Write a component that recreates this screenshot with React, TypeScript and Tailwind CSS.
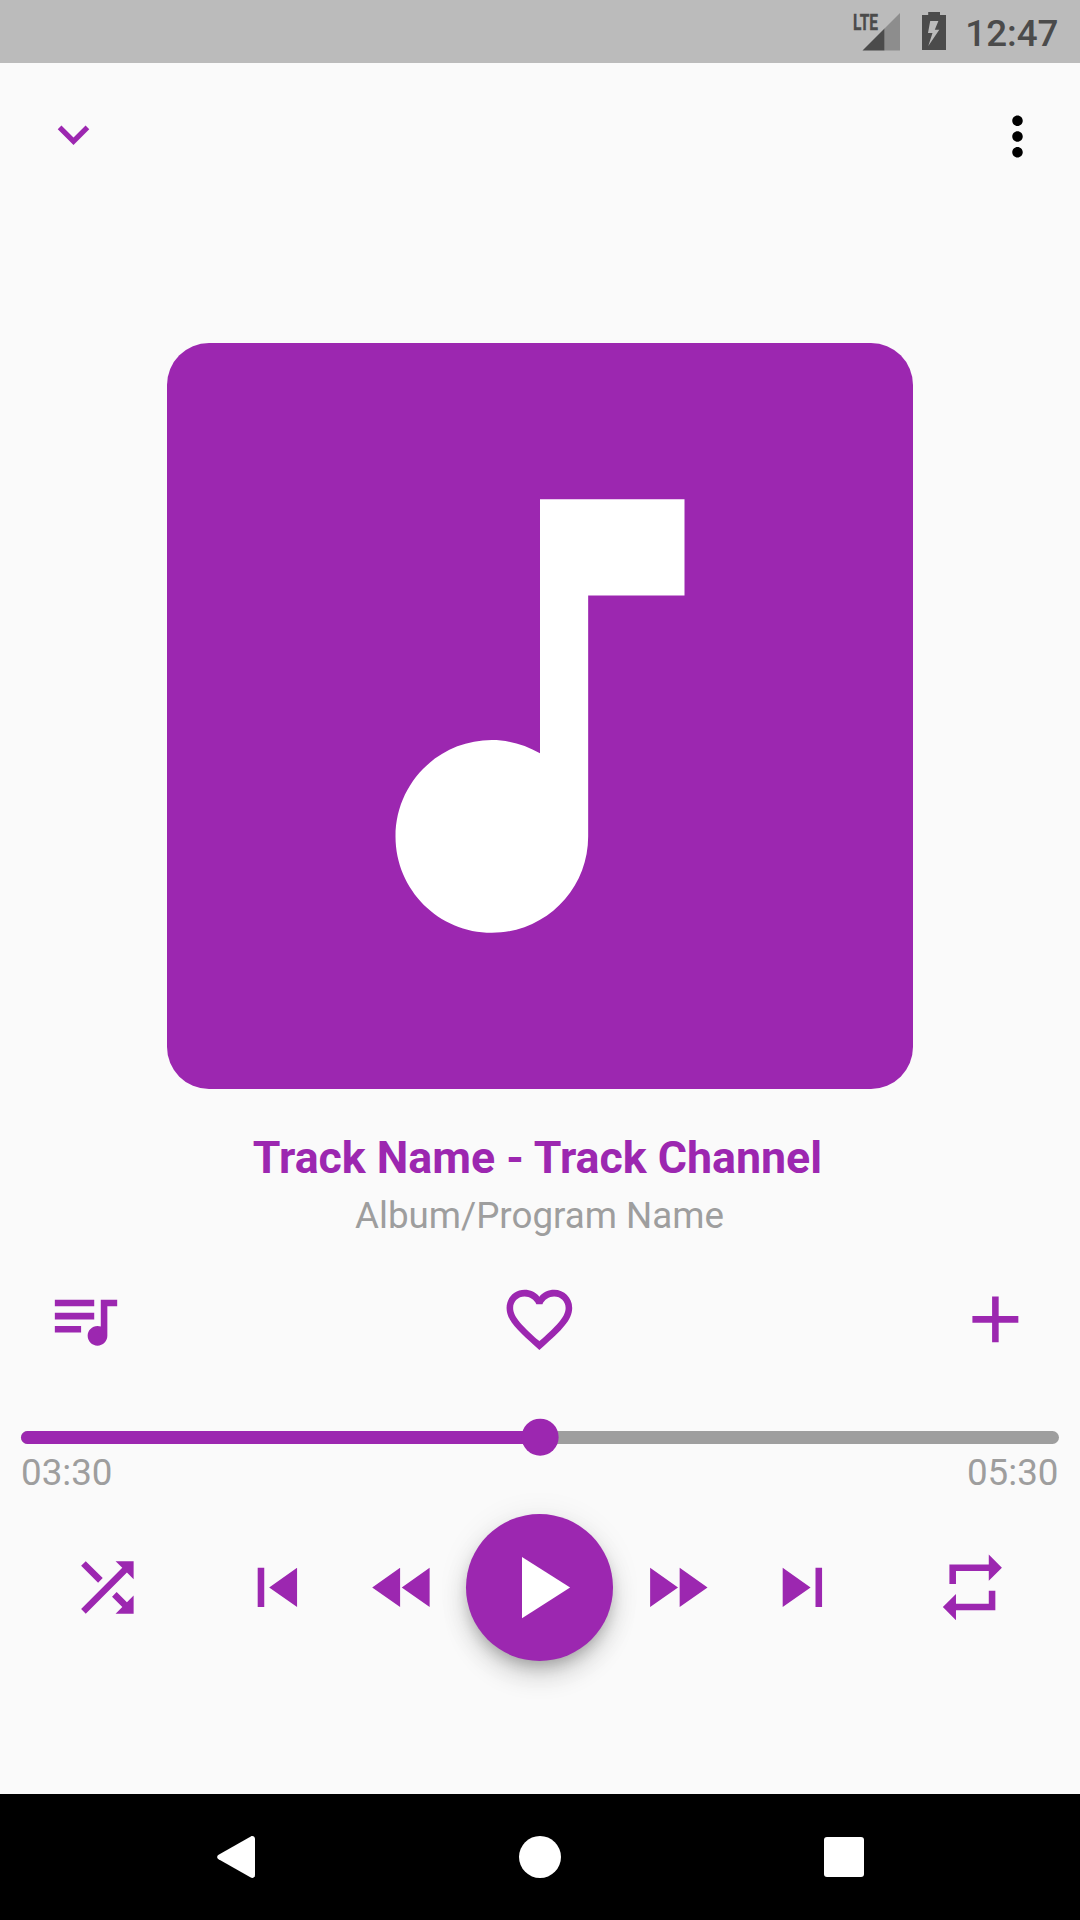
import React from "react";

type IconProps = { d: string; className?: string };

function Icon({ d, className = "size-[78.75px]" }: IconProps) {
  return (
    <svg viewBox="0 0 24 24" fill="currentColor" className={`block shrink-0 ${className}`}>
      <path d={d} />
    </svg>
  );
}

const icons = {
  down: "M7.41 8.59L12 13.17l4.59-4.58L18 10l-6 6-6-6 1.41-1.41z",
  more: "M12 8c1.1 0 2-.9 2-2s-.9-2-2-2-2 .9-2 2 .9 2 2 2zm0 2c-1.1 0-2 .9-2 2s.9 2 2 2 2-.9 2-2-.9-2-2-2zm0 6c-1.1 0-2 .9-2 2s.9 2 2 2 2-.9 2-2-.9-2-2-2z",
  note: "M12 3v10.55c-.59-.34-1.27-.55-2-.55-2.21 0-4 1.79-4 4s1.79 4 4 4 4-1.79 4-4V7h4V3h-6z",
  queue: "M15 6H3v2h12V6zm0 4H3v2h12v-2zM3 16h8v-2H3v2zM17 6v8.18c-.31-.11-.65-.18-1-.18-1.66 0-3 1.34-3 3s1.34 3 3 3 3-1.34 3-3V8h3V6h-5z",
  heart: "M16.5 3c-1.74 0-3.41.81-4.5 2.09C10.91 3.81 9.24 3 7.5 3 4.42 3 2 5.42 2 8.5c0 3.78 3.4 6.86 8.55 11.54L12 21.35l1.45-1.32C18.6 15.36 22 12.28 22 8.5 22 5.42 19.58 3 16.5 3zm-4.4 15.55l-.1.1-.1-.1C7.14 14.24 4 11.39 4 8.5 4 6.5 5.5 5 7.5 5c1.54 0 3.04.99 3.57 2.36h1.87C13.46 5.99 14.96 5 16.5 5c2 0 3.5 1.5 3.5 3.5 0 2.89-3.14 5.74-7.9 10.05z",
  add: "M19 13h-6v6h-2v-6H5v-2h6V5h2v6h6v2z",
  shuffle: "M10.59 9.17L5.41 4 4 5.41l5.17 5.17 1.42-1.41zM14.5 4l2.04 2.04L4 18.59 5.41 20 17.96 7.46 20 9.5V4h-5.5zm.33 9.41l-1.41 1.41 3.13 3.13L14.5 20H20v-5.5l-2.04 2.04-3.13-3.13z",
  previous: "M6 6h2v12H6zm3.5 6l8.5 6V6z",
  rewind: "M11 18V6l-8.5 6 8.5 6zm.5-6l8.5 6V6l-8.5 6z",
  play: "M8 5v14l11-7z",
  forward: "M4 18l8.5-6L4 6v12zm9-12v12l8.5-6L13 6z",
  next: "M6 18l8.5-6L6 6v12zM16 6v12h2V6h-2z",
  repeat: "M7 7h10v3l4-4-4-4v3H5v6h2V7zm10 10H7v-3l-4 4 4 4v-3h12v-6h-2v4z",
};

function StatusBar() {
  return (
    <header className="flex h-[63px] shrink-0 items-start justify-end bg-[#bbbbbb] pr-[21.5px] text-[#4b4b4b]">
      <svg viewBox="0 0 50 63" className="mr-[21.5px] h-[63px] w-[50px]">
        <path d="M50 13V50.5H34.5V28.5z" fill="#8d8d8d" />
        <path d="M34.5 28.5V50.5H12.5z" fill="#4b4b4b" />
        <text x="3" y="29.8" fontSize="22.5" fontWeight="700" fontFamily="Roboto, sans-serif" fill="#4b4b4b" stroke="#4b4b4b" strokeWidth="0.4" textLength="25" lengthAdjust="spacingAndGlyphs">
          LTE
        </text>
      </svg>
      <svg viewBox="0 0 24 63" className="mr-[19.5px] h-[63px] w-[24px]">
        <path fill="#4b4b4b" fillRule="evenodd" d="M6.2 12H18v3h6v35H0V15h6.2zM8.2 21L6 33h4.5L6.3 46 17.3 29.8h-4.5L16.4 21z" />
      </svg>
      <span className="mt-[12px] text-[36.75px] leading-[43px] font-medium">12:47</span>
    </header>
  );
}

function Transport() {
  return (
    <div className="mt-[20px] flex h-[147px] items-center pl-[68.2px]">
      <button className="mr-[90.9px]"><Icon d={icons.shuffle} /></button>
      <button className="mr-[47.6px]"><Icon d={icons.previous} /></button>
      <button className="mr-[23.2px]"><Icon d={icons.rewind} /></button>
      <button className="flex size-[147px] shrink-0 items-center justify-center rounded-full bg-[#9c27b0] text-white shadow-[0_8px_13px_-3px_rgba(0,0,0,0.2),0_16px_26px_0_rgba(0,0,0,0.14),0_3px_32px_0_rgba(0,0,0,0.08)]">
        <Icon d={icons.play} className="size-[105px]" />
      </button>
      <button className="mr-[47.6px] ml-[23.8px]"><Icon d={icons.forward} /></button>
      <button className="mr-[91.2px]"><Icon d={icons.next} /></button>
      <button><Icon d={icons.repeat} /></button>
    </div>
  );
}

export default function App() {
  return (
    <div className="flex h-[1920px] w-[1080px] flex-col overflow-hidden bg-[#fafafa] font-['Roboto',sans-serif] text-[#9c27b0]">
      <StatusBar />
      <main className="flex flex-1 flex-col">
        <div className="flex h-[147px] shrink-0 items-center justify-between pr-[31.5px] pl-[42px]">
          <button className="-mt-1"><Icon d={icons.down} className="size-[63px]" /></button>
          <button className="text-black"><Icon d={icons.more} className="size-[63px]" /></button>
        </div>
        <div className="mt-[133px] flex size-[745.5px] shrink-0 items-center justify-center self-center rounded-[42px] bg-[#9c27b0] text-white">
          <Icon d={icons.note} className="size-[578px]" />
        </div>
        <h1 className="mt-[43.5px] h-[52px] pl-[6px] text-center text-[44.7px] leading-[52px] font-bold whitespace-pre">
          {"Track Name - Track Channel "}
        </h1>
        <p className="mt-[10px] h-[43px] pr-[1px] text-center text-[36.75px] leading-[43px] text-[#9e9e9e]">Album/Program Name</p>
        <div className="mt-[43px] flex items-center justify-between pr-[45px] pl-[44.7px]">
          <button><Icon d={icons.queue} /></button>
          <button><Icon d={icons.heart} /></button>
          <button><Icon d={icons.add} /></button>
        </div>
        <div className="mt-[60px] flex h-[37px] items-center px-[21px]">
          <div className="relative h-[13px] w-full rounded-full bg-[#9e9e9e]">
            <div className="h-full w-1/2 rounded-l-full bg-[#9c27b0]" />
            <div className="absolute top-1/2 left-1/2 size-[36.75px] -translate-x-1/2 -translate-y-1/2 rounded-full bg-[#9c27b0]" />
          </div>
        </div>
        <div className="-mt-[5px] flex justify-between pr-[21.5px] pl-[21px] text-[36.75px] leading-[43px] text-[#9e9e9e]">
          <span>03:30</span>
          <span>05:30</span>
        </div>
        <Transport />
      </main>
      <nav className="flex h-[126px] shrink-0 items-center bg-black pl-[217px] text-white">
        <svg viewBox="0 0 38 42" className="h-[42px] w-[38px]" fill="currentColor">
          <path d="M1.6 18.7 33.8.5C35.8-.6 38 .8 38 3V39C38 41.2 35.8 42.6 33.8 41.5L1.6 23.3C-.3 22.2-.3 19.8 1.6 18.7z" />
        </svg>
        <span className="ml-[264px] size-[42px] rounded-full bg-white" />
        <span className="ml-[263px] size-[39.5px] rounded-[3px] bg-white" />
      </nav>
    </div>
  );
}
